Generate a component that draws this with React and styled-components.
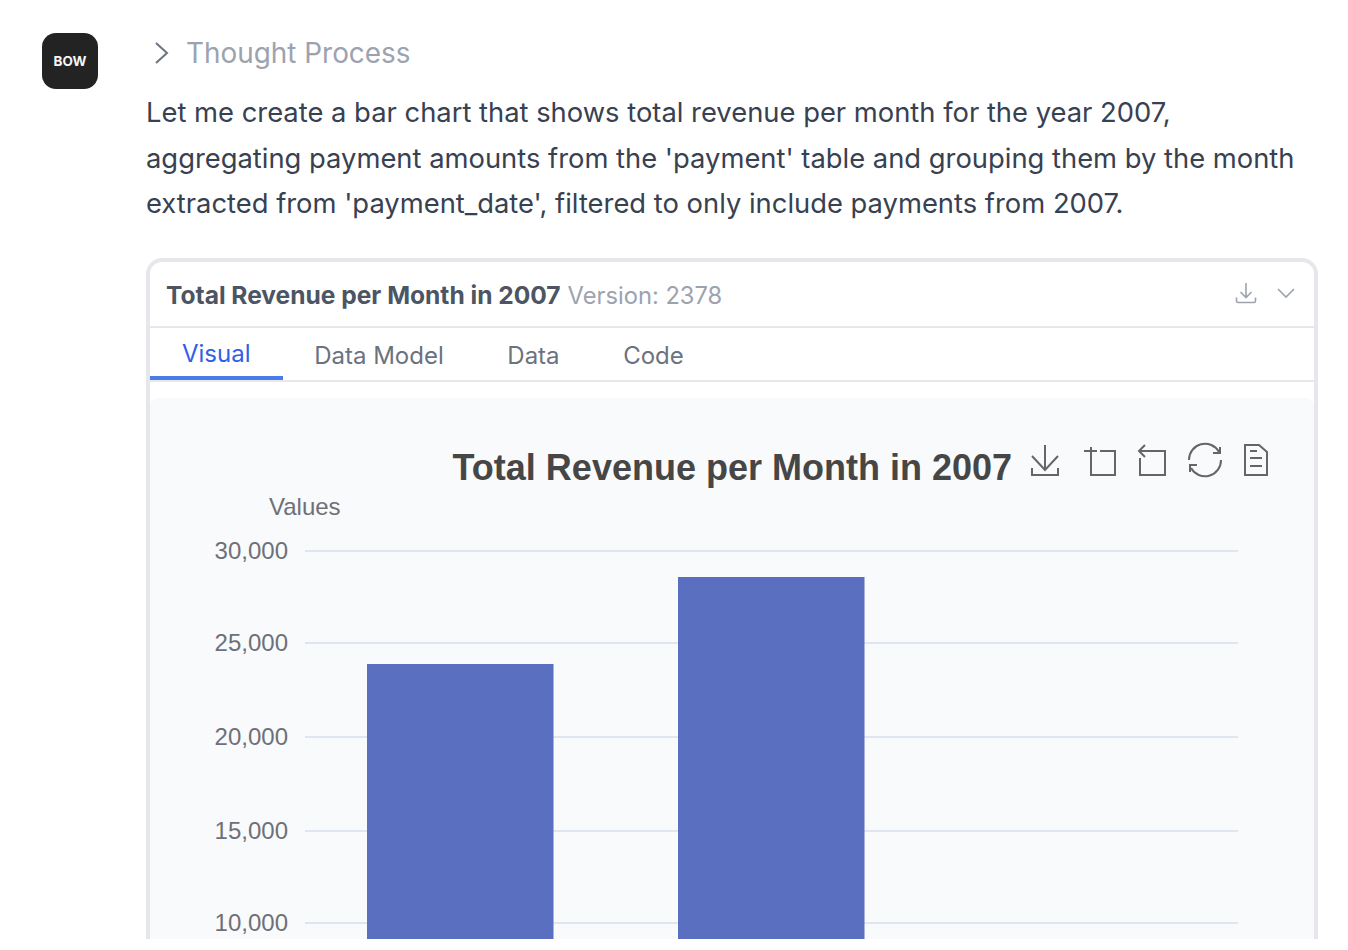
import styled, { createGlobalStyle } from "styled-components";

const GlobalStyle = createGlobalStyle`
  html, body {
    margin: 0;
    padding: 0;
    background: #fff;
  }
  body {
    font-family: Inter, "Liberation Sans", sans-serif;
  }
`;

const Page = styled.div`
  height: 939px;
  overflow: hidden;
  box-sizing: border-box;
  padding: 33px 30px 0 42px;
  display: flex;
  align-items: flex-start;
  gap: 48px;
`;

const Avatar = styled.div`
  flex: none;
  width: 56px;
  height: 56px;
  border-radius: 14px;
  background: #232323;
  color: #f5f5f5;
  display: flex;
  align-items: center;
  justify-content: center;
  font-size: 13.5px;
  font-weight: 700;
`;

const Content = styled.div`
  flex: 1;
  min-width: 0;
`;

const Thought = styled.div`
  display: flex;
  align-items: center;
  height: 40px;
  color: #9ca3af;
  font-size: 27.9px;
  svg {
    margin: 0 13px 0 3px;
  }
`;

const Message = styled.p`
  margin: 17px 0 31.5px;
  color: #374151;
  font-size: 27.37px;
  line-height: 45.5px;
`;

const Card = styled.div`
  border: 4px solid #e5e7eb;
  border-bottom: 0;
  border-radius: 16px 16px 0 0;
  background: #fff;
`;

const CardHead = styled.div`
  height: 62px;
  padding: 2px 18px 0 16px;
  display: flex;
  align-items: center;
  justify-content: space-between;
  border-bottom: 2px solid #e5e7eb;
`;

const CardTitle = styled.div`
  font-size: 24.55px;
  font-weight: 700;
  color: #4b5563;
  span {
    font-size: 23.7px;
    font-weight: 400;
    color: #9ca3af;
    margin-left: 7px;
  }
`;

const HeadIcons = styled.div`
  display: flex;
  align-items: center;
  gap: 19px;
  color: #9ca3af;
  margin-top: -5px;
`;

const TabBar = styled.div`
  display: flex;
  height: 52px;
  border-bottom: 2px solid #e5e7eb;
`;

const Tab = styled.div`
  box-sizing: border-box;
  padding: 2px 32px 0;
  margin-right: -0.4px;
  display: flex;
  align-items: center;
  font-size: 24px;
  color: ${(p) => (p.$active ? "#2f5fe8" : "#6b7280")};
  border-bottom: ${(p) => (p.$active ? "4px solid #4a7be8" : "0")};
`;

const ChartPanel = styled.div`
  margin-top: 16px;
  height: 541px;
  background: #f9fafb;
  border-radius: 8px 8px 0 0;
  overflow: hidden;
`;

const bars = [
  { x: 217, top: 266 },
  { x: 528, top: 179 },
];

const grid = [
  { y: 153, label: "30,000" },
  { y: 245, label: "25,000" },
  { y: 339, label: "20,000" },
  { y: 433, label: "15,000" },
  { y: 525, label: "10,000" },
];

function Chart() {
  return (
    <svg width="1164" height="541" viewBox="0 0 1164 541" fontFamily="'Liberation Sans', Arial, sans-serif">
      <text x="862" y="82" textAnchor="end" fontSize="36" fontWeight="700" fill="#464646">
        Total Revenue per Month in 2007
      </text>
      <text x="119" y="117" fontSize="24" fill="#6e7079">Values</text>
      {grid.map((g) => (
        <g key={g.label}>
          <line x1="155" x2="1088" y1={g.y} y2={g.y} stroke="#e0e6f1" strokeWidth="2" />
          <text x="138" y={g.y + 8} textAnchor="end" fontSize="24" fill="#6e7079">{g.label}</text>
        </g>
      ))}
      {bars.map((b) => (
        <rect key={b.x} x={b.x} y={b.top} width="186.5" height={541 - b.top} fill="#5a6fc0" />
      ))}
      <g fill="none" stroke="#666" strokeWidth="2">
        <path d="M895 47v25M882 58l13 14 13-14M882 70v7h26v-7" />
        <path d="M934 53h13M941 49v28h24V53H950" />
        <path d="M995 47l-6 6 6 6M989 53h26v24H990V60" />
        <path d="M1039 62A16 16 0 0 1 1069 54M1070 49v6h-7M1071 62A16 16 0 0 1 1041 70M1040 74v-7h7" />
        <path d="M1095 47h14l8 7v23h-22zM1100 53h7M1100 60h12M1100 68h12" />
      </g>
    </svg>
  );
}

export default function App() {
  return (
    <>
      <GlobalStyle />
      <Page>
        <Avatar>BOW</Avatar>
        <Content>
          <Thought>
            <svg width="24" height="26" viewBox="0 0 24 26" fill="none" stroke="#6b7280" strokeWidth="2">
              <path d="M7 3l11 10L7 23" />
            </svg>
            Thought Process
          </Thought>
          <Message>
            Let me create a bar chart that shows total revenue per month for the year 2007, aggregating payment amounts from the 'payment' table and grouping them by the month extracted from 'payment_date', filtered to only include payments from 2007.
          </Message>
          <Card>
            <CardHead>
              <CardTitle>
                Total Revenue per Month in 2007<span>Version: 2378</span>
              </CardTitle>
              <HeadIcons>
                <svg width="22" height="22" viewBox="0 0 22 22" fill="none" stroke="currentColor" strokeWidth="1.6">
                  <path d="M11 1v14.5M5.5 10l5.5 5.5 5.5-5.5M1.5 15.5v3.5a1.5 1.5 0 0 0 1.5 1.5h16a1.5 1.5 0 0 0 1.5-1.5v-3.5" />
                </svg>
                <svg width="20" height="12" viewBox="0 0 20 12" fill="none" stroke="currentColor" strokeWidth="1.6">
                  <path d="M2 2l8 8 8-8" />
                </svg>
              </HeadIcons>
            </CardHead>
            <TabBar>
              <Tab $active>Visual</Tab>
              <Tab>Data Model</Tab>
              <Tab>Data</Tab>
              <Tab>Code</Tab>
            </TabBar>
            <ChartPanel>
              <Chart />
            </ChartPanel>
          </Card>
        </Content>
      </Page>
    </>
  );
}
